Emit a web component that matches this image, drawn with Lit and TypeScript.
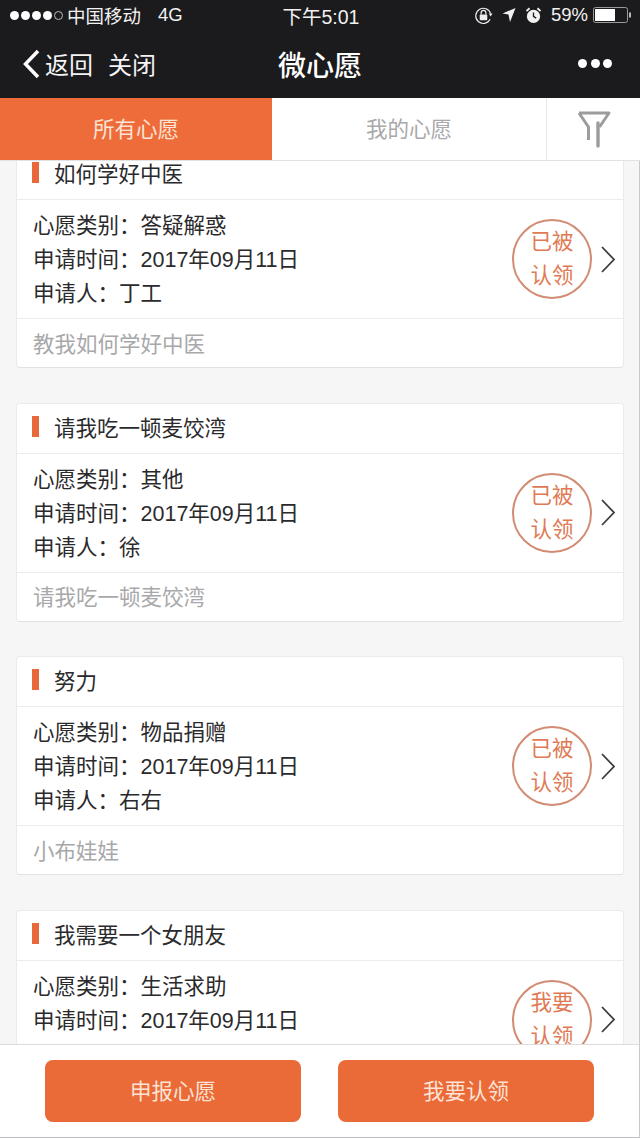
import { LitElement, html, css, svg } from "lit";
import { customElement } from "lit/decorators.js";

const wishes = [
  { title: "如何学好中医", type: "答疑解惑", name: "丁工", note: "教我如何学好中医", stamp: ["已被", "认领"] },
  { title: "请我吃一顿麦饺湾", type: "其他", name: "徐", note: "请我吃一顿麦饺湾", stamp: ["已被", "认领"] },
  { title: "努力", type: "物品捐赠", name: "右右", note: "小布娃娃", stamp: ["已被", "认领"] },
  { title: "我需要一个女朋友", type: "生活求助", name: "", note: "", stamp: ["我要", "认领"] },
];

const chevron = svg`<path d="M2 2 L14 14.5 L2 27" fill="none" stroke="#3c3c40" stroke-width="1.8"/>`;

@customElement("app-root")
export class AppRoot extends LitElement {
  static styles = css`
    :host {
      display: flex;
      flex-direction: column;
      width: 640px;
      height: 1138px;
      overflow: hidden;
      background: #f6f6f7;
      font-family: "Liberation Sans", "Noto Sans CJK SC", sans-serif;
      color: #2a2a2c;
    }

    .top {
      background: #1b1a1d;
      color: #fff;
      flex: none;
    }

    .status {
      height: 32px;
      box-sizing: border-box;
      padding: 0 8px 2px 10px;
      display: grid;
      grid-template-columns: 1fr auto 1fr;
      align-items: center;
      font-size: 18.5px;
      color: #f2f2f2;
    }

    .status-left {
      display: flex;
      align-items: center;
    }

    .dots {
      display: flex;
      gap: 2px;
      margin-right: 4px;
    }

    .dot {
      width: 9px;
      height: 9px;
      border-radius: 50%;
      background: #fff;
      box-sizing: border-box;
    }

    .dot.empty {
      background: none;
      border: 1px solid #bbb;
    }

    .net {
      margin-left: 17px;
    }

    .time {
      font-size: 19.5px;
    }

    .status-right {
      display: flex;
      align-items: center;
      justify-content: flex-end;
    }

    .status-right svg {
      display: block;
    }

    .lock {
      margin-right: 9px;
    }

    .arrow,
    .alarm {
      margin-right: 10px;
    }

    .battery {
      margin-left: 5px;
    }

    .nav {
      height: 66px;
      box-sizing: border-box;
      padding: 0 22px 3px 22px;
      display: grid;
      grid-template-columns: 1fr auto 1fr;
      align-items: center;
    }

    .nav-left {
      display: flex;
      align-items: center;
      font-size: 24px;
      color: #f4f4f4;
    }

    .nav-left svg {
      margin-right: 4px;
    }

    .close {
      margin-left: 15px;
    }

    .nav-title {
      font-size: 28px;
      font-weight: 500;
    }

    .more {
      display: flex;
      justify-content: flex-end;
      gap: 3.5px;
      margin-right: 6px;
    }

    .more i {
      width: 9px;
      height: 9px;
      border-radius: 50%;
      background: #fff;
    }

    .tabs {
      flex: none;
      height: 63px;
      display: flex;
      background: #fff;
      border-bottom: 1px solid #e2e2e2;
      box-sizing: border-box;
      font-size: 21.5px;
      position: relative;
      z-index: 1;
    }

    .tab {
      display: flex;
      align-items: center;
      justify-content: center;
      box-sizing: border-box;
      padding-bottom: 3px;
    }

    .tab.active {
      width: 272px;
      background: #ee6c39;
      color: #fde3d6;
    }

    .tab.other {
      width: 274px;
      color: #a9a9ab;
    }

    .tab.filter {
      flex: 1;
      padding-bottom: 0;
      border-left: 1px solid #e8e8e8;
    }

    .list {
      flex: 1;
      min-height: 0;
      overflow: hidden;
      border-right: 1px solid #c9c9cb;
    }

    .scroller {
      margin-top: -12px;
      padding: 0 15px 0 16px;
      display: flex;
      flex-direction: column;
      gap: 34.67px;
    }

    .card {
      flex: none;
      height: 219px;
      box-sizing: border-box;
      background: #fff;
      border: 1px solid #ebebec;
      border-bottom-color: #e2e2e3;
      border-radius: 4px;
      display: flex;
      flex-direction: column;
    }

    .card-title {
      height: 50px;
      box-sizing: border-box;
      padding: 0 0 4px 15px;
      display: flex;
      align-items: center;
      gap: 15px;
      border-bottom: 1px solid #ececed;
      font-size: 21.5px;
    }

    .mark {
      width: 7px;
      height: 21px;
      background: #e9683a;
    }

    .card-body {
      height: 119px;
      box-sizing: border-box;
      display: flex;
      align-items: center;
      padding: 0 7px 0 16px;
      border-bottom: 1px solid #ececed;
    }

    .rows {
      flex: 1;
      margin-top: 2px;
      font-size: 21.5px;
      line-height: 34px;
    }

    .row {
      display: flex;
      height: 34px;
    }

    .stamp {
      flex: none;
      width: 80px;
      height: 80px;
      box-sizing: border-box;
      border: 2px solid #d38c74;
      border-radius: 50%;
      display: flex;
      flex-direction: column;
      align-items: center;
      justify-content: center;
      font-size: 21.5px;
      line-height: 34px;
      color: #e07a55;
      margin-right: 8px;
    }

    .card-note {
      flex: 1;
      display: flex;
      align-items: center;
      padding: 0 0 2px 16px;
      font-size: 21.5px;
      color: #a8a8aa;
    }

    .footer {
      flex: none;
      height: 94px;
      box-sizing: border-box;
      background: #fff;
      border-top: 1px solid #dcdcdd;
      border-bottom: 1px solid #bdbdbf;
      border-right: 1px solid #c9c9cb;
      padding: 15px 45px;
      display: flex;
      gap: 37px;
      position: relative;
    }

    .btn {
      flex: 1;
      box-sizing: border-box;
      padding-bottom: 3px;
      border-radius: 8px;
      background: #ea6a38;
      color: #fde3d6;
      font-size: 21.5px;
      display: flex;
      align-items: center;
      justify-content: center;
    }
  `;

  private renderStatus() {
    return html`
      <div class="status">
        <div class="status-left">
          <div class="dots">
            <span class="dot"></span><span class="dot"></span><span class="dot"></span><span class="dot"></span><span class="dot empty"></span>
          </div>
          <span>中国移动</span><span class="net">4G</span>
        </div>
        <div class="time">下午5:01</div>
        <div class="status-right">
          <svg class="lock" width="19" height="19" viewBox="0 0 20 20">
            <path d="M17.5 8 A8 8 0 1 0 17 14" fill="none" stroke="#eee" stroke-width="1.2"/>
            <path d="M15.5 8 L19.5 8 L17.5 11 Z" fill="#eee"/>
            <rect x="6" y="9" width="8" height="6" rx="1" fill="#eee"/>
            <path d="M7.5 9 V7 a2.5 2.5 0 0 1 5 0 V9" fill="none" stroke="#eee" stroke-width="1.3"/>
          </svg>
          <svg class="arrow" width="14" height="16" viewBox="0 0 14 16">
            <path d="M13.5 1 L8 15 L6.5 7.5 L0.5 6.500 Z" fill="#f2f2f2"/>
          </svg>
          <svg class="alarm" width="15" height="17" viewBox="0 0 17 18">
            <circle cx="8.500" cy="10" r="7.500" fill="#f2f2f2"/>
            <path d="M8.500 5.500 V10 L11.500 12" fill="none" stroke="#1b1a1d" stroke-width="1.500"/>
            <path d="M0.500 4 L4 0.800 M16.500 4 L13 0.800" stroke="#f2f2f2" stroke-width="2"/>
          </svg>
          <span>59%</span>
          <svg class="battery" width="39" height="16" viewBox="0 0 39 16">
            <rect x="0.500" y="0.500" width="34" height="15" rx="2" fill="none" stroke="#9a9a9c"/>
            <rect x="2" y="2" width="20" height="12" fill="#fff"/>
            <rect x="36" y="5.500" width="2" height="5" fill="#bbb"/>
          </svg>
        </div>
      </div>
    `;
  }

  private renderCard(w: (typeof wishes)[number]) {
    return html`
      <div class="card">
        <div class="card-title"><span class="mark"></span><span>${w.title}</span></div>
        <div class="card-body">
          <div class="rows">
            <div class="row"><span>心愿类别：</span><span>${w.type}</span></div>
            <div class="row"><span>申请时间：</span><span>2017年09月11日</span></div>
            ${w.name ? html`<div class="row"><span>申请人：</span><span>${w.name}</span></div>` : html`<div class="row"></div>`}
          </div>
          <div class="stamp">${w.stamp.map((s) => html`<span>${s}</span>`)}</div>
          <svg width="16" height="29" viewBox="0 0 16 29">${chevron}</svg>
        </div>
        <div class="card-note">${w.note}</div>
      </div>
    `;
  }

  render() {
    return html`
      <div class="top">
        ${this.renderStatus()}
        <div class="nav">
          <div class="nav-left">
            <svg width="19" height="30" viewBox="0 0 19 30">
              <path d="M16 2 L3.500 15 L16 28" fill="none" stroke="#fff" stroke-width="3.500"/>
            </svg>
            <span>返回</span><span class="close">关闭</span>
          </div>
          <div class="nav-title">微心愿</div>
          <div class="more"><i></i><i></i><i></i></div>
        </div>
      </div>
      <div class="tabs">
        <div class="tab active">所有心愿</div>
        <div class="tab other">我的心愿</div>
        <div class="tab filter">
          <svg width="34" height="38" viewBox="0 0 34 38">
            <path d="M2 3 H32 L22.500 17 M2 3 L11.500 17 V30" fill="none" stroke="#9c9c9e" stroke-width="3" stroke-linejoin="round"/>
            <path d="M21 13 V36" fill="none" stroke="#9c9c9e" stroke-width="3.400" stroke-linecap="round"/>
          </svg>
        </div>
      </div>
      <div class="list">
        <div class="scroller">${wishes.map((w) => this.renderCard(w))}</div>
      </div>
      <div class="footer">
        <div class="btn">申报心愿</div>
        <div class="btn">我要认领</div>
      </div>
    `;
  }
}

declare global {
  interface HTMLElementTagNameMap {
    "app-root": AppRoot;
  }
}
